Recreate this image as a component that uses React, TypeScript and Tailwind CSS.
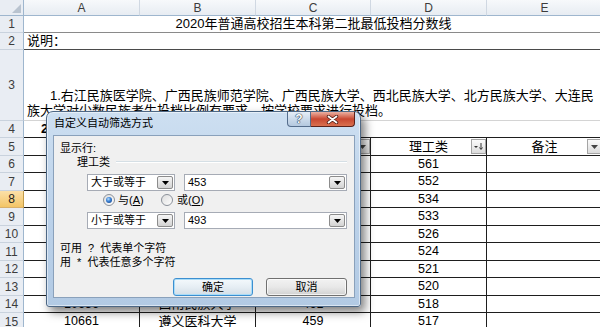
import React from "react";

const colW = ["w-[116px]", "w-[116px]", "w-[115px]", "w-[116px]", "w-[116px]"];
const letters = ["A", "B", "C", "D", "E"];

const tableRows = [
  { n: 5, h: "h-[18px]", cells: ["院校代号", "院校名称", "文史类", "理工类", "备注"] },
  { n: 6, h: "h-[17px]", cells: ["10599", "右江民族医学院", "488", "561", ""] },
  { n: 7, h: "h-[18px]", cells: ["10604", "广西民族师范学院", "479", "552", ""] },
  { n: 8, h: "h-[17px]", cells: ["10608", "广西民族大学", "493", "534", ""] },
  { n: 9, h: "h-[18px]", cells: ["10742", "西北民族大学", "480", "533", ""] },
  { n: 10, h: "h-[17px]", cells: ["11407", "北方民族大学", "472", "526", ""] },
  { n: 11, h: "h-[18px]", cells: ["12026", "大连民族大学", "470", "524", ""] },
  { n: 12, h: "h-[17px]", cells: ["10489", "长江大学", "466", "521", ""] },
  { n: 13, h: "h-[18px]", cells: ["10623", "西华大学", "463", "520", ""] },
  { n: 14, h: "h-[17px]", cells: ["10656", "西南民族大学", "461", "518", ""] },
  { n: 15, h: "h-[18px]", cells: ["10661", "遵义医科大学", "459", "517", ""] },
];

function RowHead({ n, active }: { n: number; active?: boolean }) {
  return (
    <div
      className={
        active
          ? "w-[24px] shrink-0 flex items-center justify-center border-r border-b border-r-[#c29b4a] border-b-[#d8b06a] bg-gradient-to-b from-[#fbe0a8] to-[#f3c565] text-[12px] text-[#222]"
          : "w-[24px] shrink-0 flex items-center justify-center border-r border-b border-r-[#9eb6ce] border-b-[#c9d2dd] bg-[#e9edf3] text-[12px] text-[#3c3c3c]"
      }
    >
      {n}
    </div>
  );
}

function FilterBtn({ sorted }: { sorted?: boolean }) {
  return (
    <div className="absolute right-0 top-[1px] w-[15px] h-[15px] border border-[#a5a5a5] bg-gradient-to-b from-[#fbfbfb] to-[#dcdcdc] flex items-center justify-center">
      {sorted ? (
        <svg width="11" height="9" viewBox="0 0 11 9">
          <path d="M1 4H5L3 6Z" fill="#333" />
          <path d="M8 1V7M6.5 5.5L8 7.5L9.5 5.5" stroke="#333" strokeWidth="1" fill="none" />
        </svg>
      ) : (
        <svg width="7" height="4" viewBox="0 0 7 4">
          <path d="M0 0H7L3.5 4Z" fill="#444" />
        </svg>
      )}
    </div>
  );
}

function Sheet() {
  return (
    <div className="flex flex-col">
      {/* column header */}
      <div className="flex h-[16px]">
        <div className="w-[24px] shrink-0 flex items-end justify-end pr-[2px] pb-[2px] border-r border-b border-[#9eb6ce] bg-[#e9edf3]">
          <svg width="9" height="9" viewBox="0 0 9 9">
            <path d="M9 0V9H0Z" fill="#b9c3cf" />
          </svg>
        </div>
        {letters.map((l, i) => (
          <div
            key={l}
            className={`${colW[i]} shrink-0 flex items-center justify-center border-r border-b border-r-[#d0d8e2] border-b-[#9eb6ce] bg-gradient-to-b from-[#f7f9fb] to-[#e7ecf2] text-[12px] text-[#3c3c3c]`}
          >
            {l}
          </div>
        ))}
      </div>

      {/* row 1 */}
      <div className="flex h-[17px]">
        <RowHead n={1} />
        <div className="w-[579px] shrink-0 flex items-center justify-center border-b border-[#8a8a8a] text-[13px] text-black whitespace-nowrap">
          2020年普通高校招生本科第二批最低投档分数线
        </div>
      </div>

      {/* row 2 */}
      <div className="flex h-[17px]">
        <RowHead n={2} />
        <div className="w-[579px] shrink-0 flex items-center pl-[3px] border-b border-[#4a4a4a] text-[13px] text-black">
          说明：
        </div>
      </div>

      {/* row 3 */}
      <div className="flex h-[71px]">
        <RowHead n={3} />
        <div className="w-[579px] shrink-0 flex flex-col justify-end pl-[3px] pb-[2px] border-b border-[#d4d4d4] text-[13px] leading-[15px] text-black whitespace-nowrap">
          <span className="pl-[23px]">1.右江民族医学院、广西民族师范学院、广西民族大学、西北民族大学、北方民族大学、大连民</span>
          <span>族大学对少数民族考生投档比例有要求，按学校要求进行投档。</span>
        </div>
      </div>

      {/* row 4 */}
      <div className="flex h-[17px]">
        <RowHead n={4} />
        <div className="w-[579px] shrink-0 flex items-center pl-[17px] border-b border-[#1e1e1e] text-[13px] font-bold text-black">
          2.
        </div>
      </div>

      {tableRows.map((r, ri) => (
        <div key={r.n} className={`flex ${r.h}`}>
          <RowHead n={r.n} active={r.n === 8} />
          {r.cells.map((c, i) => (
            <div
              key={i}
              className={`${colW[i]} shrink-0 relative flex items-center justify-center border-r border-b border-[#1e1e1e] text-black whitespace-nowrap ${
                /^\d+$/.test(c) ? "text-[12.5px]" : "text-[13px]"
              }`}
            >
              {c}
              {ri === 0 && <FilterBtn sorted={i === 3} />}
            </div>
          ))}
        </div>
      ))}
    </div>
  );
}

function Combo({ value, w }: { value: string; w: string }) {
  return (
    <div className={`${w} h-[17px] flex items-stretch bg-white border border-[#a6abb5]`}>
      <span className="flex-1 pl-[3px] leading-[15px] text-[11px] text-black">{value}</span>
      <div className="w-[16px] my-px mr-px rounded-[2px] border border-[#8c8c8c] bg-gradient-to-b from-[#f6f6f6] to-[#d3d3d3] flex items-center justify-center">
        <svg width="7" height="4" viewBox="0 0 7 4">
          <path d="M0 0H7L3.5 4Z" fill="#000" />
        </svg>
      </div>
    </div>
  );
}

function Radio({ checked, id }: { checked?: boolean; id: string }) {
  return (
    <svg width="12" height="12" viewBox="0 0 12 12" className="shrink-0">
      <defs>
        <linearGradient id={`${id}bg`} x1="0" y1="0" x2="1" y2="1">
          <stop offset="0" stopColor="#dcdcdc" />
          <stop offset="1" stopColor="#ffffff" />
        </linearGradient>
        <radialGradient id={`${id}dot`} cx="0.4" cy="0.35" r="0.7">
          <stop offset="0" stopColor="#b9e0ff" />
          <stop offset="0.5" stopColor="#3f86d8" />
          <stop offset="1" stopColor="#1a4f9c" />
        </radialGradient>
      </defs>
      <circle cx="6" cy="6" r="5.5" fill={`url(#${id}bg)`} stroke="#8a9099" strokeWidth="1" />
      {checked && <circle cx="6" cy="6" r="3" fill={`url(#${id}dot)`} />}
    </svg>
  );
}

function FilterDialog() {
  return (
    <div className="absolute left-[46px] top-[111px] w-[315px] h-[196px] flex flex-col pl-[6px] pr-[5px] pb-[8px] rounded-t-[7px] rounded-b-[3px] border border-[#4d6784] bg-gradient-to-b from-[#cddff1] via-[#bcd2ea] to-[#b2cae4] shadow-[4px_5px_10px_rgba(0,0,0,0.5),inset_0_0_0_1px_rgba(255,255,255,0.5)] font-['Liberation_Sans','Noto_Sans_CJK_SC',sans-serif]">
      {/* title bar */}
      <div className="h-[23px] flex items-start justify-between">
        <span className="pt-[4px] pl-px leading-[15px] text-[11px] text-black">自定义自动筛选方式</span>
        <div className="flex">
          <div className="w-[24px] h-[15px] rounded-bl-[4px] border border-t-0 border-[#556d8c] bg-gradient-to-b from-[#e6eef7] via-[#ccdbeb] to-[#b4c8df] flex items-center justify-center">
            <span className="text-[12px] font-bold leading-none text-white [text-shadow:0_0_1px_#24364f,0_0_1px_#24364f,0_0_1px_#24364f]">?</span>
          </div>
          <div className="w-[44px] h-[15px] rounded-br-[4px] border border-t-0 border-l-0 border-[#5b2119] bg-gradient-to-b from-[#eab0a2] via-[#c84731] to-[#d9704f] flex items-center justify-center">
            <svg width="13" height="9" viewBox="0 0 13 9">
              <path d="M2.5 1.5L10.5 7.5M10.5 1.5L2.5 7.5" stroke="#4a1a12" strokeWidth="3.4" strokeLinecap="round" />
              <path d="M2.5 1.5L10.5 7.5M10.5 1.5L2.5 7.5" stroke="#fff" strokeWidth="1.8" strokeLinecap="round" />
            </svg>
          </div>
        </div>
      </div>

      {/* client area */}
      <div className="flex-1 flex flex-col pl-[6px] pr-[7px] pt-[5px] bg-[#f0f0f0] border border-[#8aa1bb] text-[11px] leading-[14px] text-black">
        <div className="h-[14px]">显示行:</div>
        <div className="h-[14px] flex items-center pl-[17px]">
          <span>理工类</span>
          <div className="flex-1 ml-[6px] h-[2px] border-t border-b border-t-[#d5dfe5] border-b-white" />
        </div>
        <div className="mt-[5px] ml-[27px] flex gap-[9px]">
          <Combo value="大于或等于" w="w-[88px]" />
          <Combo value="453" w="w-[163px]" />
        </div>
        <div className="mt-[2px] h-[14px] ml-[43px] flex items-center">
          <div className="w-[58px] flex items-center gap-[3px]">
            <Radio id="ra" checked />
            <span className="whitespace-nowrap">
              与(<span className="underline">A</span>)
            </span>
          </div>
          <div className="flex items-center gap-[4px]">
            <Radio id="rb" />
            <span className="whitespace-nowrap">
              或(<span className="underline">O</span>)
            </span>
          </div>
        </div>
        <div className="mt-[5px] ml-[27px] flex gap-[9px]">
          <Combo value="小于或等于" w="w-[88px]" />
          <Combo value="493" w="w-[163px]" />
        </div>
        <div className="mt-[12px] h-[14px] whitespace-pre">可用  ?  代表单个字符</div>
        <div className="h-[14px] whitespace-pre">用  *  代表任意多个字符</div>
        <div className="mt-[9px] flex justify-end gap-[13px]">
          <button className="w-[80px] h-[18px] rounded-[3px] border border-[#3c8fd0] bg-gradient-to-b from-[#f4f9fc] via-[#e6eef4] to-[#d4dee6] shadow-[inset_0_0_0_1px_#a9dcf8] text-[11px] leading-[14px] text-black">
            确定
          </button>
          <button className="w-[81px] h-[18px] rounded-[3px] border border-[#707070] bg-gradient-to-b from-[#f2f2f2] via-[#e8e8e8] to-[#d2d2d2] shadow-[inset_0_0_0_1px_rgba(255,255,255,0.7)] text-[11px] leading-[14px] text-black">
            取消
          </button>
        </div>
      </div>
    </div>
  );
}

export default function App() {
  return (
    <div className="relative w-[600px] h-[327px] overflow-hidden bg-white font-['Liberation_Sans','Noto_Sans_CJK_SC',sans-serif]">
      <Sheet />
      <FilterDialog />
    </div>
  );
}
